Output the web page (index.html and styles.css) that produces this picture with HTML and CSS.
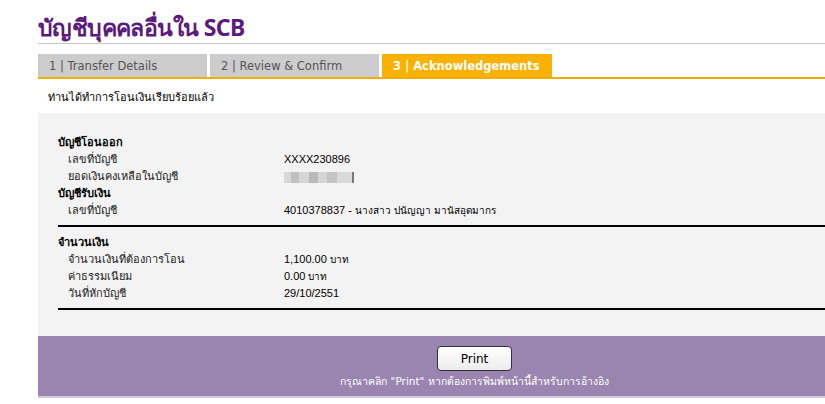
FILE: index.html
```html
<!DOCTYPE html>
<html>
<head>
<meta charset="utf-8">
<link rel="stylesheet" href="styles.css">
</head>
<body>
<div class="page">
  <h1 class="title">บัญชีบุคคลอื่นใน SCB</h1>
  <div class="tabs">
    <div class="tab">1 | Transfer Details</div>
    <div class="tab">2 | Review &amp; Confirm</div>
    <div class="tab active">3 | Acknowledgements</div>
  </div>
  <p class="msg">ท่านได้ทำการโอนเงินเรียบร้อยแล้ว</p>
  <div class="panel">
    <div class="section">
      <div class="head">บัญชีโอนออก</div>
      <div class="row"><span class="label">เลขที่บัญชี</span><span class="value">XXXX230896</span></div>
      <div class="row"><span class="label">ยอดเงินคงเหลือในบัญชี</span><span class="value"><span class="blur"></span></span></div>
      <div class="head">บัญชีรับเงิน</div>
      <div class="row"><span class="label">เลขที่บัญชี</span><span class="value">4010378837 - <span class="th">นางสาว ปนัญญา มานัสอุดมากร</span></span></div>
    </div>
    <div class="section">
      <div class="head">จำนวนเงิน</div>
      <div class="row"><span class="label">จำนวนเงินที่ต้องการโอน</span><span class="value">1,100.00 <span class="th">บาท</span></span></div>
      <div class="row"><span class="label">ค่าธรรมเนียม</span><span class="value">0.00 <span class="th">บาท</span></span></div>
      <div class="row"><span class="label">วันที่หักบัญชี</span><span class="value">29/10/2551</span></div>
    </div>
  </div>
  <div class="footer">
    <button class="print">Print</button>
    <div class="note">กรุณาคลิก "Print" หากต้องการพิมพ์หน้านี้สำหรับการอ้างอิง</div>
  </div>
</div>
</body>
</html>
```

FILE: styles.css
```css
html, body { margin: 0; padding: 0; background: #fff; }
body { font-family: Tahoma, "DejaVu Sans", sans-serif; font-size: 11px; color: #000; }
.page { margin-left: 38px; }
.title {
  margin: 0;
  height: 44px;
  box-sizing: border-box;
  padding-top: 13px;
  font-size: 23px;
  line-height: 28px;
  font-weight: bold;
  color: #5b1a7c;
  font-family: "Noto Sans", "Liberation Sans", sans-serif;
  letter-spacing: -0.6px;
  border-bottom: 1px solid #c8c8c8;
}
.tabs {
  display: flex;
  gap: 3px;
  margin-top: 10px;
  border-bottom: 2px solid #f2ae00;
}
.tab {
  width: 169px;
  height: 23px;
  line-height: 25px;
  box-sizing: border-box;
  padding-left: 11px;
  background: #cccccc;
  color: #555;
  font-family: "DejaVu Sans", sans-serif;
  font-size: 11.5px;
}
.tab.active { background: #fbb100; color: #fff; font-weight: bold; width: 170px; }
.msg { margin: 0; padding: 10px 0 0 10px; height: 24px; line-height: 18px; font-size: 11px; }
.panel {
  background: #f3f3f3;
  padding: 19px 0 26px 20px;
}
.section { border-bottom: 2px solid #000; padding: 2px 0 6px 0; }
.section + .section { padding-top: 7px; }
.head { font-weight: bold; height: 17px; line-height: 17px; font-size: 11px; }
.row { display: flex; height: 17px; line-height: 17px; }
.label { width: 216px; padding-left: 10px; color: #222; }
.value { font-family: "Liberation Sans", Arial, sans-serif; font-size: 11px; }
.value .th { font-family: Tahoma, "DejaVu Sans", sans-serif; font-size: 10px; }
.blur {
  display: inline-block;
  width: 70px;
  height: 11px;
  vertical-align: middle;
  background: linear-gradient(90deg, #d8d8d8 0 10%, #c0c0c0 10% 22%, #d6d6d6 22% 36%, #b9b9b9 36% 48%, #d5d5d5 48% 62%, #c4c4c4 62% 76%, #dadada 76% 97%, #777 97%);
}
.footer {
  background: #9a84b0;
  height: 62px;
  box-sizing: border-box;
  padding: 10px 0 0 86px;
  text-align: center;
  border-bottom: 2px solid #cfc8d8;
}
.print {
  width: 75px;
  height: 25px;
  border: 1px solid #333;
  border-radius: 4px;
  background: linear-gradient(#ffffff, #ececec);
  font-family: "DejaVu Sans", sans-serif;
  font-size: 12px;
  color: #000;
  padding: 0;
}
.note { color: #fff; font-size: 10.5px; line-height: 16px; margin-top: 2px; }
```
